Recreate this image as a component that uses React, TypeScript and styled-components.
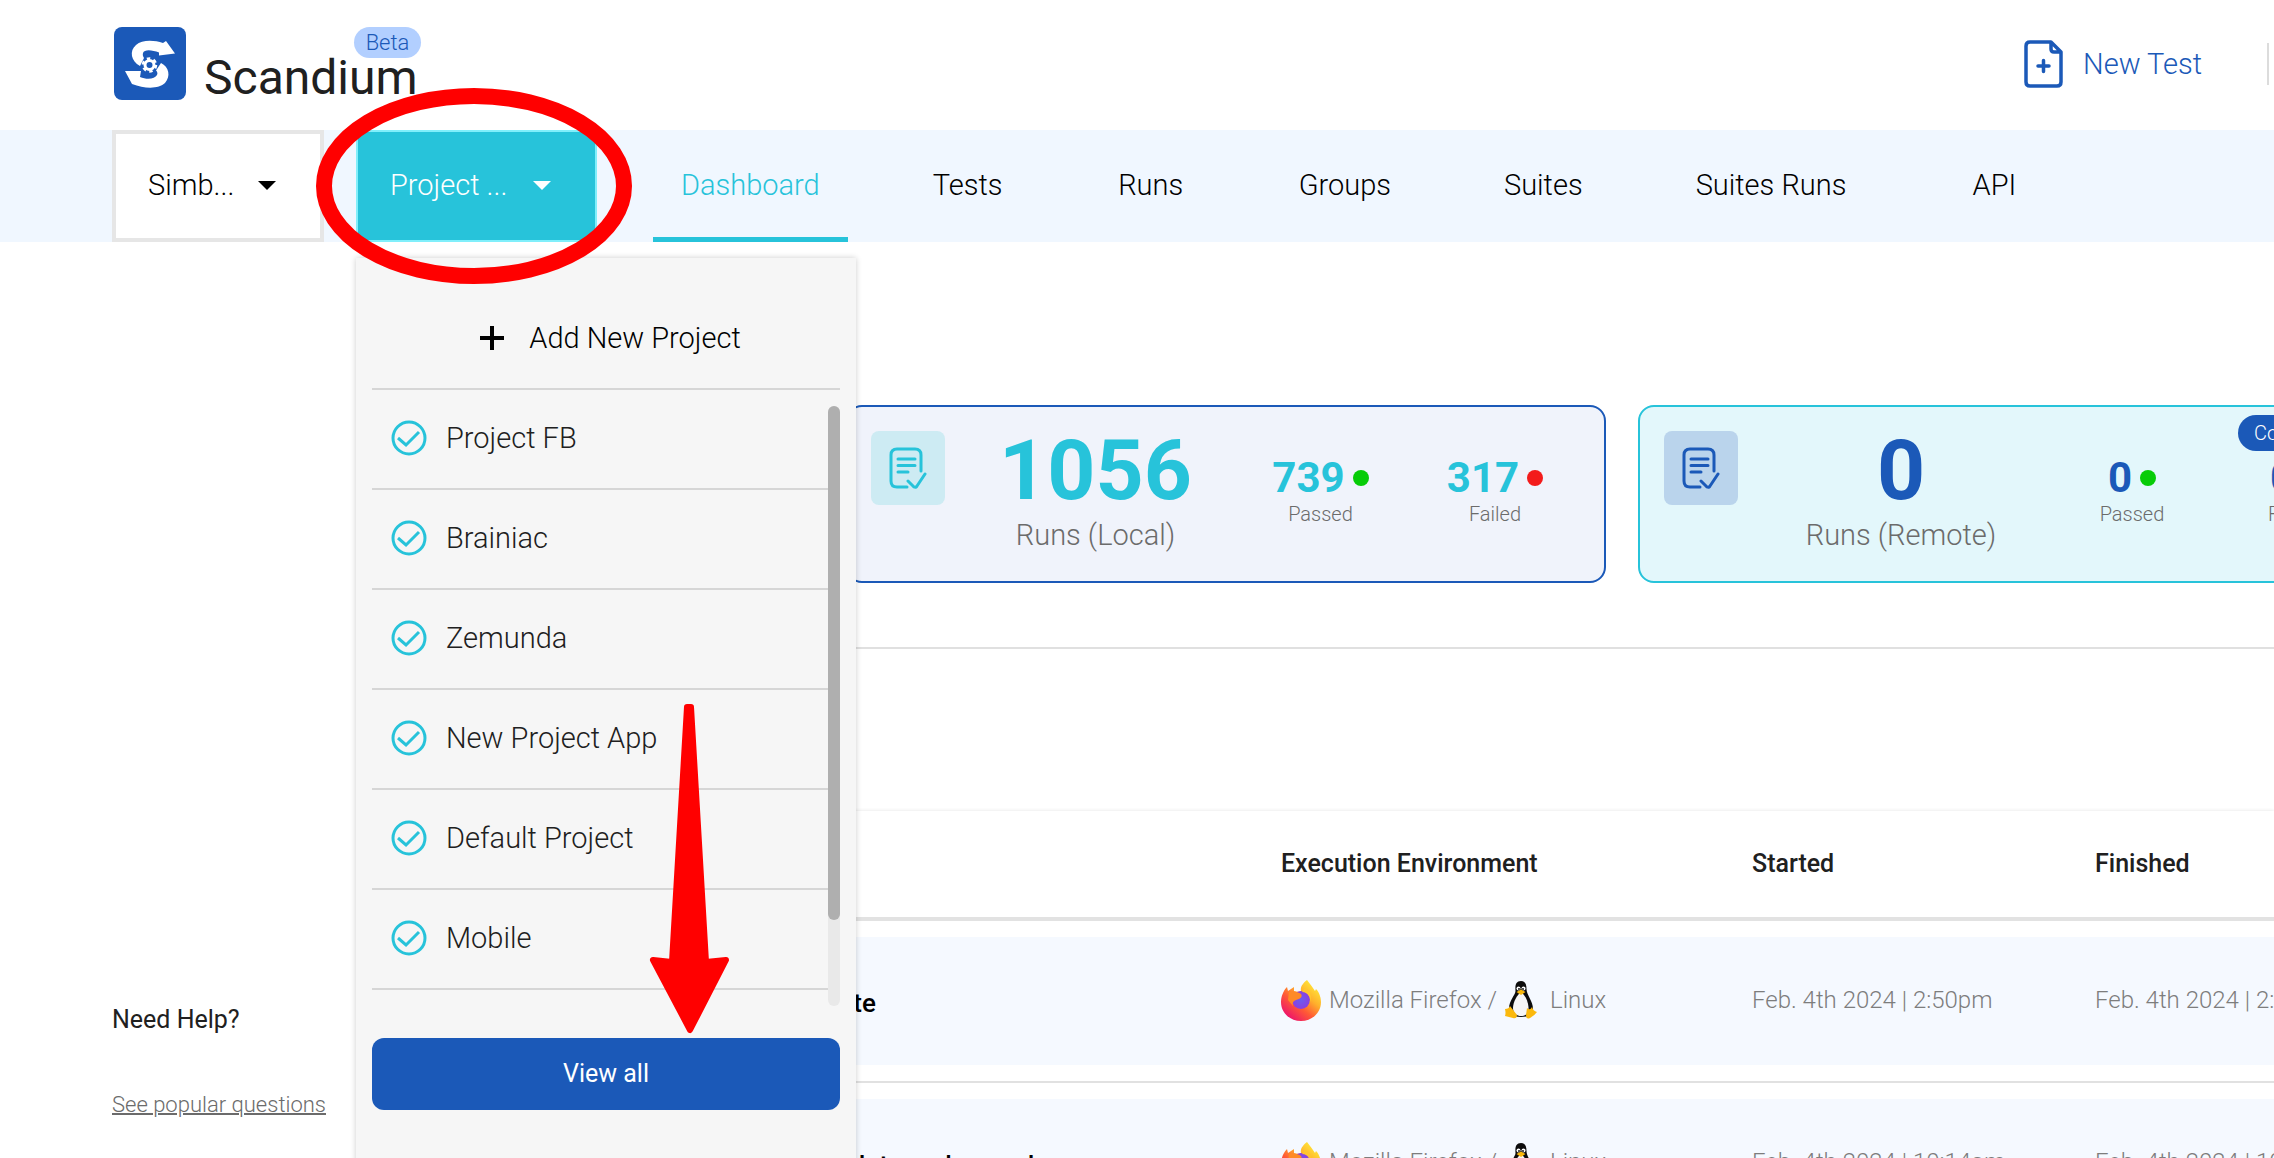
import React from "react";
import styled, { createGlobalStyle } from "styled-components";

const color = {
  blue: "#1b59b8",
  cyan: "#27c3da",
  navBg: "#f0f7ff",
  ink: "#202020",
  muted: "#6b6b6b",
  faint: "#7d7d7d",
  line: "#e1e1e1",
};

const GlobalStyle = createGlobalStyle`
  * { box-sizing: border-box; }
  body { margin: 0; background: #fff; overflow: hidden; }
  button, a, table { font: inherit; color: inherit; }
  button { border: 0; background: none; padding: 0; cursor: pointer; }
  a { text-decoration: none; }
  ul { list-style: none; margin: 0; padding: 0; }
  p, h2 { margin: 0; }
`;

const Page = styled.div`
  position: relative;
  height: 100vh;
  overflow: hidden;
  display: flex;
  flex-direction: column;
  font-family: Roboto, "Open Sans", sans-serif;
  font-size: 29px;
  font-weight: 300;
  color: ${color.ink};
`;

const Header = styled.header`
  flex: none;
  height: 130px;
  display: flex;
  align-items: center;
  justify-content: space-between;
  padding: 0 5px 3px 114px;
`;

const Brand = styled.a`
  position: relative;
  display: flex;
  align-items: center;
  gap: 18px;
`;

const BrandName = styled.span`
  font-size: 48px;
  line-height: 56px;
  font-weight: 400;
  padding-top: 28px;
`;

const BetaBadge = styled.span`
  position: absolute;
  top: 5px;
  left: 240px;
  width: 67px;
  border-radius: 16px;
  background: #b2cfff;
  color: ${color.blue};
  font-size: 22px;
  line-height: 31px;
  text-align: center;
`;

const HeaderActions = styled.div`
  display: flex;
  align-items: center;
  gap: 65px;
`;

const NewTest = styled.button`
  display: flex;
  align-items: center;
  gap: 20px;
  color: ${color.blue};
`;

const Divider = styled.span`
  width: 2px;
  height: 42px;
  background: #dcdcdc;
`;

const Nav = styled.nav`
  flex: none;
  height: 112px;
  display: flex;
  padding-left: 112px;
  background: ${color.navBg};
  color: #000;
`;

const Picker = styled.button<{ $active?: boolean }>`
  width: ${(p) => (p.$active ? 241 : 212)}px;
  margin-right: ${(p) => (p.$active ? 56 : 32)}px;
  display: flex;
  align-items: center;
  justify-content: space-between;
  padding: 0 44px 2px 32px;
  border: ${(p) => (p.$active ? "2px solid #80effb" : "4px solid #e6e6e6")};
  background: ${(p) => (p.$active ? color.cyan : "#fff")};
  color: ${(p) => (p.$active ? "#fff" : "#000")};
`;

const Caret = styled.span`
  border: 9px solid transparent;
  border-top-color: currentColor;
  border-bottom: 0;
`;

const Tab = styled.a<{ $current?: boolean }>`
  min-width: 126px;
  display: flex;
  align-items: center;
  justify-content: center;
  padding: 3px 28px 0;
  margin-right: 57px;
  border-bottom: 5px solid ${(p) => (p.$current ? color.cyan : "transparent")};
  color: ${(p) => (p.$current ? color.cyan : "#000")};
`;

const Body = styled.div`
  flex: 1;
  min-height: 0;
  display: flex;
`;

const Sidebar = styled.aside`
  flex: none;
  width: 356px;
  padding: 0 28px 40px 112px;
  display: flex;
  flex-direction: column;
  justify-content: flex-end;
  gap: 58px;
`;

const HelpTitle = styled.h2`
  font-size: 25px;
  line-height: 28px;
  font-weight: 400;
`;

const HelpLink = styled.a`
  font-size: 22px;
  line-height: 26px;
  color: ${color.muted};
  text-decoration: underline;
  text-decoration-thickness: 2px;
  white-space: nowrap;
`;

const Main = styled.main`
  flex: 1;
  min-width: 0;
  overflow: hidden;
`;

const Stats = styled.section`
  display: flex;
  gap: 32px;
  padding: 163px 0 64px 490px;
  border-bottom: 2px solid #e0e0e0;
`;

const StatCard = styled.article<{ $remote?: boolean }>`
  position: relative;
  flex: none;
  width: 760px;
  height: 178px;
  display: grid;
  grid-template-columns: ${(p) =>
    p.$remote ? "74px 326px 136px 188px" : "74px 301px 149px 200px"};
  padding: 24px 0 0 ${(p) => (p.$remote ? 24 : 23)}px;
  border: 2px solid ${(p) => (p.$remote ? color.cyan : color.blue)};
  border-radius: 16px;
  background: ${(p) => (p.$remote ? "#e3f7fb" : "#f0f3fb")};
  color: ${(p) => (p.$remote ? color.blue : color.cyan)};
`;

const IconTile = styled.span<{ $remote?: boolean }>`
  height: 74px;
  display: grid;
  place-items: center;
  border-radius: 8px;
  background: ${(p) => (p.$remote ? "#bad4ec" : "#cdebf3")};
`;

const Total = styled.div`
  display: flex;
  flex-direction: column;
  align-items: center;
  gap: 8px;
`;

const TotalValue = styled.strong`
  font-size: 84px;
  line-height: 80px;
  font-weight: 700;
`;

const TotalLabel = styled.span`
  font-size: 29px;
  line-height: 32px;
  color: ${color.muted};
`;

const Count = styled.div`
  display: flex;
  flex-direction: column;
  align-items: center;
  padding-top: 23px;
`;

const CountValue = styled.strong`
  display: flex;
  align-items: center;
  gap: 8px;
  font-size: 42px;
  line-height: 48px;
  font-weight: 700;
`;

const Dot = styled.span<{ $failed?: boolean }>`
  width: 16px;
  height: 16px;
  border-radius: 50%;
  background: ${(p) => (p.$failed ? "#f31b1b" : "#07cc07")};
`;

const CountLabel = styled.span`
  font-size: 20px;
  line-height: 24px;
  color: ${color.muted};
`;

const SoonBadge = styled.span`
  position: absolute;
  top: 8px;
  right: 16px;
  width: 142px;
  padding-left: 16px;
  border-radius: 18px;
  background: ${color.blue};
  color: #fff;
  font-size: 20px;
  line-height: 36px;
`;

const RunTable = styled.table`
  width: 100%;
  margin-top: 162px;
  border-collapse: separate;
  border-spacing: 0;
  table-layout: fixed;
  box-shadow: 0 -1px 3px rgba(0, 0, 0, 0.07);
  white-space: nowrap;
`;

const HeadCell = styled.th<{ $width?: number }>`
  width: ${(p) => (p.$width ? `${p.$width}px` : "auto")};
  height: 110px;
  padding: 0 0 2px;
  border-bottom: 4px solid #e2e2e2;
  text-align: left;
  font-size: 25px;
  font-weight: 500;
`;

const Cell = styled.td`
  padding: 16px 0;
  border-bottom: 2px solid ${color.line};
  overflow: hidden;
`;

const CellBody = styled.div<{ $name?: boolean }>`
  height: 128px;
  display: flex;
  align-items: center;
  gap: 8px;
  padding: ${(p) => (p.$name ? "4px 0 0 437px" : "0 0 2px")};
  background: #f5f9ff;
  font-size: ${(p) => (p.$name ? 26 : 24)}px;
  font-weight: ${(p) => (p.$name ? 500 : 300)};
  color: ${(p) => (p.$name ? "#000" : color.faint)};
`;

const Platform = styled.span`
  display: flex;
  align-items: center;
  gap: 13px;
`;

const Menu = styled.div`
  position: absolute;
  top: 258px;
  left: 356px;
  width: 500px;
  height: 930px;
  padding: 32px 16px;
  background: #f6f6f6;
  box-shadow: 0 0 6px rgba(0, 0, 0, 0.2);
`;

const AddProject = styled.button`
  width: 100%;
  height: 100px;
  display: flex;
  align-items: center;
  justify-content: center;
  gap: 20px;
  padding: 0 0 2px 8px;
  border-bottom: 2px solid #d6d6d6;
  color: #000;
`;

const ListFrame = styled.div`
  display: flex;
  height: 616px;
`;

const ProjectList = styled.ul`
  flex: 1;
`;

const ProjectRow = styled.li`
  height: 100px;
  border-bottom: 2px solid #d6d6d6;
`;

const ProjectButton = styled.button`
  width: 100%;
  height: 98px;
  display: flex;
  align-items: center;
  gap: 19px;
  padding: 0 0 2px 19px;
`;

const Track = styled.div`
  width: 12px;
  height: 600px;
  margin-top: 16px;
  border-radius: 6px;
  background: #e9e9e9;
`;

const Thumb = styled.div`
  height: 514px;
  border-radius: 6px;
  background: #afafaf;
`;

const ViewAll = styled.button`
  width: 100%;
  height: 72px;
  margin-top: 32px;
  padding-bottom: 2px;
  border-radius: 12px;
  background: ${color.blue};
  color: #fff;
  font-size: 25px;
  font-weight: 400;
`;

const Markup = styled.svg<{ $x: number; $y: number }>`
  position: absolute;
  left: ${(p) => p.$x}px;
  top: ${(p) => p.$y}px;
  pointer-events: none;
`;

const Logo = () => (
  <svg width="72" height="73" viewBox="0 0 72 73">
    <rect width="72" height="73" rx="8" fill={color.blue} />
    <path d="M26 39C17 34 15 24 22 18C28 12.500 40 13 49 16L52 14L61 26.500L45 28.500V25.500C38 22.500 30 22 29 26C28.500 28 29 29.500 30 31L26 39Z" fill="#fff" />
    <path d="M47 36C55 40 57 49 51 56C45 62 31 62 18 57L11 44H27L26 50C33 53 41 52 43 48C44 46 43 44.500 42 43.500L47 36Z" fill="#fff" />
    <circle cx="35.500" cy="38" r="4.500" fill="none" stroke="#fff" strokeWidth="3" />
    <circle cx="35.500" cy="38" r="6.500" fill="none" stroke="#fff" strokeWidth="2.500" strokeDasharray="3.400 3.400" />
  </svg>
);

const NewFileIcon = () => (
  <svg width="39" height="48" viewBox="0 0 39 48" fill="none" stroke={color.blue} strokeWidth="3.500" strokeLinejoin="round" strokeLinecap="round">
    <path d="M27 2H6Q2 2 2 6V42Q2 46 6 46H33Q37 46 37 42V12L27 2V9Q27 12 30 12H37" />
    <path d="M19.500 20.500V31.500M14 26H25" />
  </svg>
);

const ReportIcon = () => (
  <svg width="38" height="42" viewBox="0 0 38 42" fill="none" stroke="currentColor" strokeWidth="3" strokeLinecap="round" strokeLinejoin="round">
    <path d="M18 40H8Q2 40 2 34V8Q2 2 8 2H26Q32 2 32 8V24" />
    <path d="M9 12H26M9 18.500H26M9 25H19M19 34L25 40Q27 41 28 39L36 27" />
  </svg>
);

const CheckIcon = () => (
  <svg width="36" height="36" viewBox="0 0 36 36" fill="none" stroke={color.cyan} strokeWidth="3">
    <circle cx="18" cy="18" r="16" />
    <path d="M7 18L15 25L28 12" />
  </svg>
);

const PlusIcon = () => (
  <svg width="30" height="26" viewBox="0 0 30 26" stroke="#000" strokeWidth="4">
    <path d="M13 1V25M1 13H25" />
  </svg>
);

const FirefoxIcon = () => (
  <svg width="40" height="41" viewBox="0 0 40 41">
    <defs>
      <linearGradient id="fox" x1="0.850" y1="0.100" x2="0.200" y2="0.900">
        <stop offset="0" stopColor="#ffe83a" />
        <stop offset="0.350" stopColor="#ffb02b" />
        <stop offset="0.650" stopColor="#ff5a35" />
        <stop offset="1" stopColor="#ee1868" />
      </linearGradient>
      <radialGradient id="globe">
        <stop offset="0" stopColor="#6b5cf0" />
        <stop offset="1" stopColor="#8a3fe0" />
      </radialGradient>
    </defs>
    <path d="M26 0C30 5 32 8 34 11L35 9C39 13 40 19 40 22C40 33 31 41 20 41S0 33 0 22C0 17 2 11 6 7L7 11L13 7V11C16 12 18 12 20 11C19 7 22 3 26 0Z" fill="url(#fox)" />
    <circle cx="20" cy="20" r="9" fill="url(#globe)" />
    <path d="M8 12C12 11 18 12 20 14C22 17 19 19 15 20C12 21 11 23 12 26L7 20Z" fill="#ff8a26" />
    <path d="M21 12C27 12 31 18 28 24C32 17 30 10 24 8Z" fill="#ffc52e" />
  </svg>
);

const TuxIcon = () => (
  <svg width="32" height="38" viewBox="0 0 32 38">
    <path d="M16 0C11 0 10 4 10.500 10C10.500 14 4 19 4 28C4 33 8 36 16 36S28 33 28 28C28 20 21.500 14 21.500 8C21.500 3 20 0 16 0Z" fill="#0c0c0c" />
    <path d="M16 11C12 14 8 21 8 27C8 33 12 35 16 35S24 33 23.500 26C23 20 20 14 16 11Z" fill="#f6f6f6" />
    <circle cx="13.500" cy="7.500" r="2" fill="#fff" />
    <circle cx="18.500" cy="7.500" r="2" fill="#fff" />
    <circle cx="14" cy="8" r="0.900" fill="#000" />
    <circle cx="18" cy="8" r="0.900" fill="#000" />
    <path d="M11.500 11L16 8.500L20.500 11L16 14Z" fill="#f9b80c" />
    <path d="M5 25L12 34Q12 38 8 37L0 35Q1 32 0 28Q4 28 5 25Z" fill="#fbb90d" />
    <path d="M22 27Q25 30 27 26Q28 30 32 31Q30 34 25 37Q21 39 21 34Z" fill="#fbb90d" />
  </svg>
);

const tabs = ["Dashboard", "Tests", "Runs", "Groups", "Suites", "Suites Runs", "API"];
const projects = ["Project FB", "Brainiac", "Zemunda", "New Project App", "Default Project", "Mobile"];
const runs = [
  { name: "Update", started: "Feb. 4th 2024 | 2:50pm", finished: "Feb. 4th 2024 | 2:51pm" },
  { name: "Template and cancel", started: "Feb. 4th 2024 | 10:14am", finished: "Feb. 4th 2024 | 10:15am" },
];

type StatProps = { label: string; total: number; passed: number; failed: number; remote?: boolean };

const Stat = ({ label, total, passed, failed, remote }: StatProps) => (
  <StatCard $remote={remote}>
    <IconTile $remote={remote}><ReportIcon /></IconTile>
    <Total>
      <TotalValue>{total}</TotalValue>
      <TotalLabel>{label}</TotalLabel>
    </Total>
    <Count>
      <CountValue>{passed}<Dot /></CountValue>
      <CountLabel>Passed</CountLabel>
    </Count>
    <Count>
      <CountValue>{failed}<Dot $failed /></CountValue>
      <CountLabel>Failed</CountLabel>
    </Count>
    {remote && <SoonBadge>Coming soon</SoonBadge>}
  </StatCard>
);

export default function App() {
  return (
    <Page>
      <GlobalStyle />
      <Header>
        <Brand href="#">
          <Logo />
          <BrandName>Scandium</BrandName>
          <BetaBadge>Beta</BetaBadge>
        </Brand>
        <HeaderActions>
          <NewTest><NewFileIcon />New Test</NewTest>
          <Divider />
        </HeaderActions>
      </Header>
      <Nav>
        <Picker>Simb...<Caret /></Picker>
        <Picker $active>Project ...<Caret /></Picker>
        {tabs.map((tab, i) => (
          <Tab key={tab} href="#" $current={i === 0}>{tab}</Tab>
        ))}
      </Nav>
      <Body>
        <Sidebar>
          <HelpTitle>Need Help?</HelpTitle>
          <HelpLink href="#">See popular questions</HelpLink>
        </Sidebar>
        <Main>
          <Stats>
            <Stat label="Runs (Local)" total={1056} passed={739} failed={317} />
            <Stat label="Runs (Remote)" total={0} passed={0} failed={0} remote />
          </Stats>
          <RunTable>
            <thead>
              <tr>
                <HeadCell $width={925} />
                <HeadCell $width={471}>Execution Environment</HeadCell>
                <HeadCell $width={343}>Started</HeadCell>
                <HeadCell>Finished</HeadCell>
              </tr>
            </thead>
            <tbody>
              {runs.map((run) => (
                <tr key={run.name}>
                  <Cell><CellBody $name>{run.name}</CellBody></Cell>
                  <Cell>
                    <CellBody>
                      <FirefoxIcon />Mozilla Firefox /
                      <Platform><TuxIcon />Linux</Platform>
                    </CellBody>
                  </Cell>
                  <Cell><CellBody>{run.started}</CellBody></Cell>
                  <Cell><CellBody>{run.finished}</CellBody></Cell>
                </tr>
              ))}
            </tbody>
          </RunTable>
        </Main>
      </Body>
      <Menu>
        <AddProject><PlusIcon />Add New Project</AddProject>
        <ListFrame>
          <ProjectList>
            {projects.map((name) => (
              <ProjectRow key={name}>
                <ProjectButton><CheckIcon />{name}</ProjectButton>
              </ProjectRow>
            ))}
          </ProjectList>
          <Track><Thumb /></Track>
        </ListFrame>
        <ViewAll>View all</ViewAll>
      </Menu>
      <Markup $x={316} $y={88} width="316" height="196" viewBox="0 0 316 196" aria-hidden="true">
        <ellipse cx="158" cy="98" rx="150" ry="90" fill="none" stroke="#f00" strokeWidth="16" />
      </Markup>
      <Markup $x={649} $y={704} width="81" height="330" viewBox="0 0 81 330" aria-hidden="true">
        <path d="M38 3L42 3L57 258L77 256L41 326L4 256L23 258Z" fill="#f00" stroke="#f00" strokeWidth="6" strokeLinejoin="round" />
      </Markup>
    </Page>
  );
}
